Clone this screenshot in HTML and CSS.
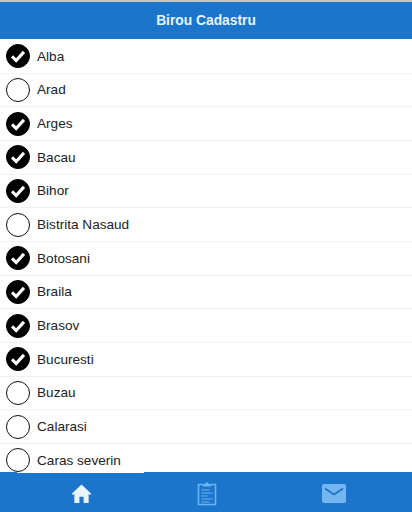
FILE: index.html
```html
<!DOCTYPE html>
<html lang="en">
<head>
    <meta charset="UTF-8">
    <meta name="viewport" content="width=device-width, initial-scale=1.0">
    <title>Birou Cadastru</title>
    <link rel="stylesheet" href="styles.css">
</head>
<body>
    <header class="topbar">Birou Cadastru</header>

    <ul class="county-list">
        <li class="county"><span class="check on"><svg viewBox="0 0 24 24"><path d="M5.5 12.5l4.5 4.5 8.5-9.5"/></svg></span>Alba</li>
        <li class="county"><span class="check"></span>Arad</li>
        <li class="county"><span class="check on"><svg viewBox="0 0 24 24"><path d="M5.5 12.5l4.5 4.5 8.5-9.5"/></svg></span>Arges</li>
        <li class="county"><span class="check on"><svg viewBox="0 0 24 24"><path d="M5.5 12.5l4.5 4.5 8.5-9.5"/></svg></span>Bacau</li>
        <li class="county"><span class="check on"><svg viewBox="0 0 24 24"><path d="M5.5 12.5l4.5 4.5 8.5-9.5"/></svg></span>Bihor</li>
        <li class="county"><span class="check"></span>Bistrita Nasaud</li>
        <li class="county"><span class="check on"><svg viewBox="0 0 24 24"><path d="M5.5 12.5l4.5 4.5 8.5-9.5"/></svg></span>Botosani</li>
        <li class="county"><span class="check on"><svg viewBox="0 0 24 24"><path d="M5.5 12.5l4.5 4.5 8.5-9.5"/></svg></span>Braila</li>
        <li class="county"><span class="check on"><svg viewBox="0 0 24 24"><path d="M5.5 12.5l4.5 4.5 8.5-9.5"/></svg></span>Brasov</li>
        <li class="county"><span class="check on"><svg viewBox="0 0 24 24"><path d="M5.5 12.5l4.5 4.5 8.5-9.5"/></svg></span>Bucuresti</li>
        <li class="county"><span class="check"></span>Buzau</li>
        <li class="county"><span class="check"></span>Calarasi</li>
        <li class="county"><span class="check"></span>Caras severin</li>
    </ul>

    <nav class="tabbar">
        <span class="tab-notch"></span>
        <a class="tab">
            <svg class="icon-home" viewBox="0 0 22 22"><path d="M11 1.5L0.8 11.2l1.2 1.3 1.5-1.3V21h5.3v-6.5h4.4V21h5.3v-9.8l1.5 1.3 1.2-1.3z"/></svg>
        </a>
        <a class="tab">
            <svg class="icon-notes" viewBox="0 0 20 25">
                <path class="outline" d="M6 3.5H1.5v20h17v-20H14"/>
                <path class="solid" d="M6 5.5V3h2.2a1.8 1.8 0 0 1 3.6 0H14v2.5z"/>
                <path class="outline thin" d="M4.5 9h8M4.5 12h11M4.5 15h6M4.5 18h11M4.5 21h8"/>
            </svg>
        </a>
        <a class="tab">
            <svg class="icon-mail" viewBox="0 0 24 19">
                <rect class="solid" x="0" y="0" width="24" height="19" rx="2"/>
                <path class="flap" d="M3 4.5l9 6 9-6"/>
            </svg>
        </a>
    </nav>
</body>
</html>
```

FILE: styles.css
```css
html, body {
    margin: 0;
    padding: 0;
}
body {
    width: 412px;
    height: 512px;
    overflow: hidden;
    display: flex;
    flex-direction: column;
    font-family: "Liberation Sans", Arial, sans-serif;
    background-color: #fff;
}
.topbar {
    flex: none;
    height: 37px;
    margin-top: 2px;
    margin-bottom: 1px;
    line-height: 37px;
    text-align: center;
    font-size: 13.8px;
    font-weight: bold;
    color: #e6f4ff;
    background-color: #1b75cb;
    box-shadow: 0 -2px 0 #c4c4c4;
}
.county-list {
    flex: 1;
    margin: 0;
    padding: 0;
    list-style: none;
    overflow: hidden;
    min-height: 0;
}
.county {
    display: flex;
    align-items: center;
    gap: 7px;
    box-sizing: border-box;
    height: 33.67px;
    padding-left: 6px;
    font-size: 13.6px;
    color: #222;
    border-bottom: 1px solid #f0f0f0;
}
.check {
    flex: none;
    box-sizing: border-box;
    width: 24px;
    height: 24px;
    border: 1px solid #111;
    border-radius: 50%;
    background-color: #fff;
}
.check.on {
    background-color: #000;
    border-color: #000;
}
.check svg {
    display: block;
    width: 22px;
    height: 22px;
    fill: none;
    stroke: #fff;
    stroke-width: 3.4;
}
.tabbar {
    flex: none;
    position: relative;
    height: 40px;
    padding: 0 15px 0 18px;
    display: flex;
    background-color: #1b75cb;
}
.tab-notch {
    position: absolute;
    left: 17px;
    top: 0;
    width: 127px;
    height: 1px;
    background-color: #fff;
}
.tab {
    flex: 1;
    display: flex;
    align-items: center;
    justify-content: center;
}
.icon-home {
    width: 21px;
    height: 21px;
    margin-top: 3px;
    fill: #eaf6ff;
}
.icon-notes {
    width: 20px;
    height: 25px;
    margin-top: 3px;
}
.icon-notes .outline {
    fill: none;
    stroke: #6db3f2;
    stroke-width: 1.6;
}
.icon-notes .thin {
    stroke-width: 1.2;
}
.icon-notes .solid {
    fill: #6db3f2;
}
.icon-mail {
    width: 24px;
    height: 19px;
    margin-top: 3px;
}
.icon-mail .solid {
    fill: #76b6ee;
}
.icon-mail .flap {
    fill: none;
    stroke: #1b75cb;
    stroke-width: 1.8;
}
```
